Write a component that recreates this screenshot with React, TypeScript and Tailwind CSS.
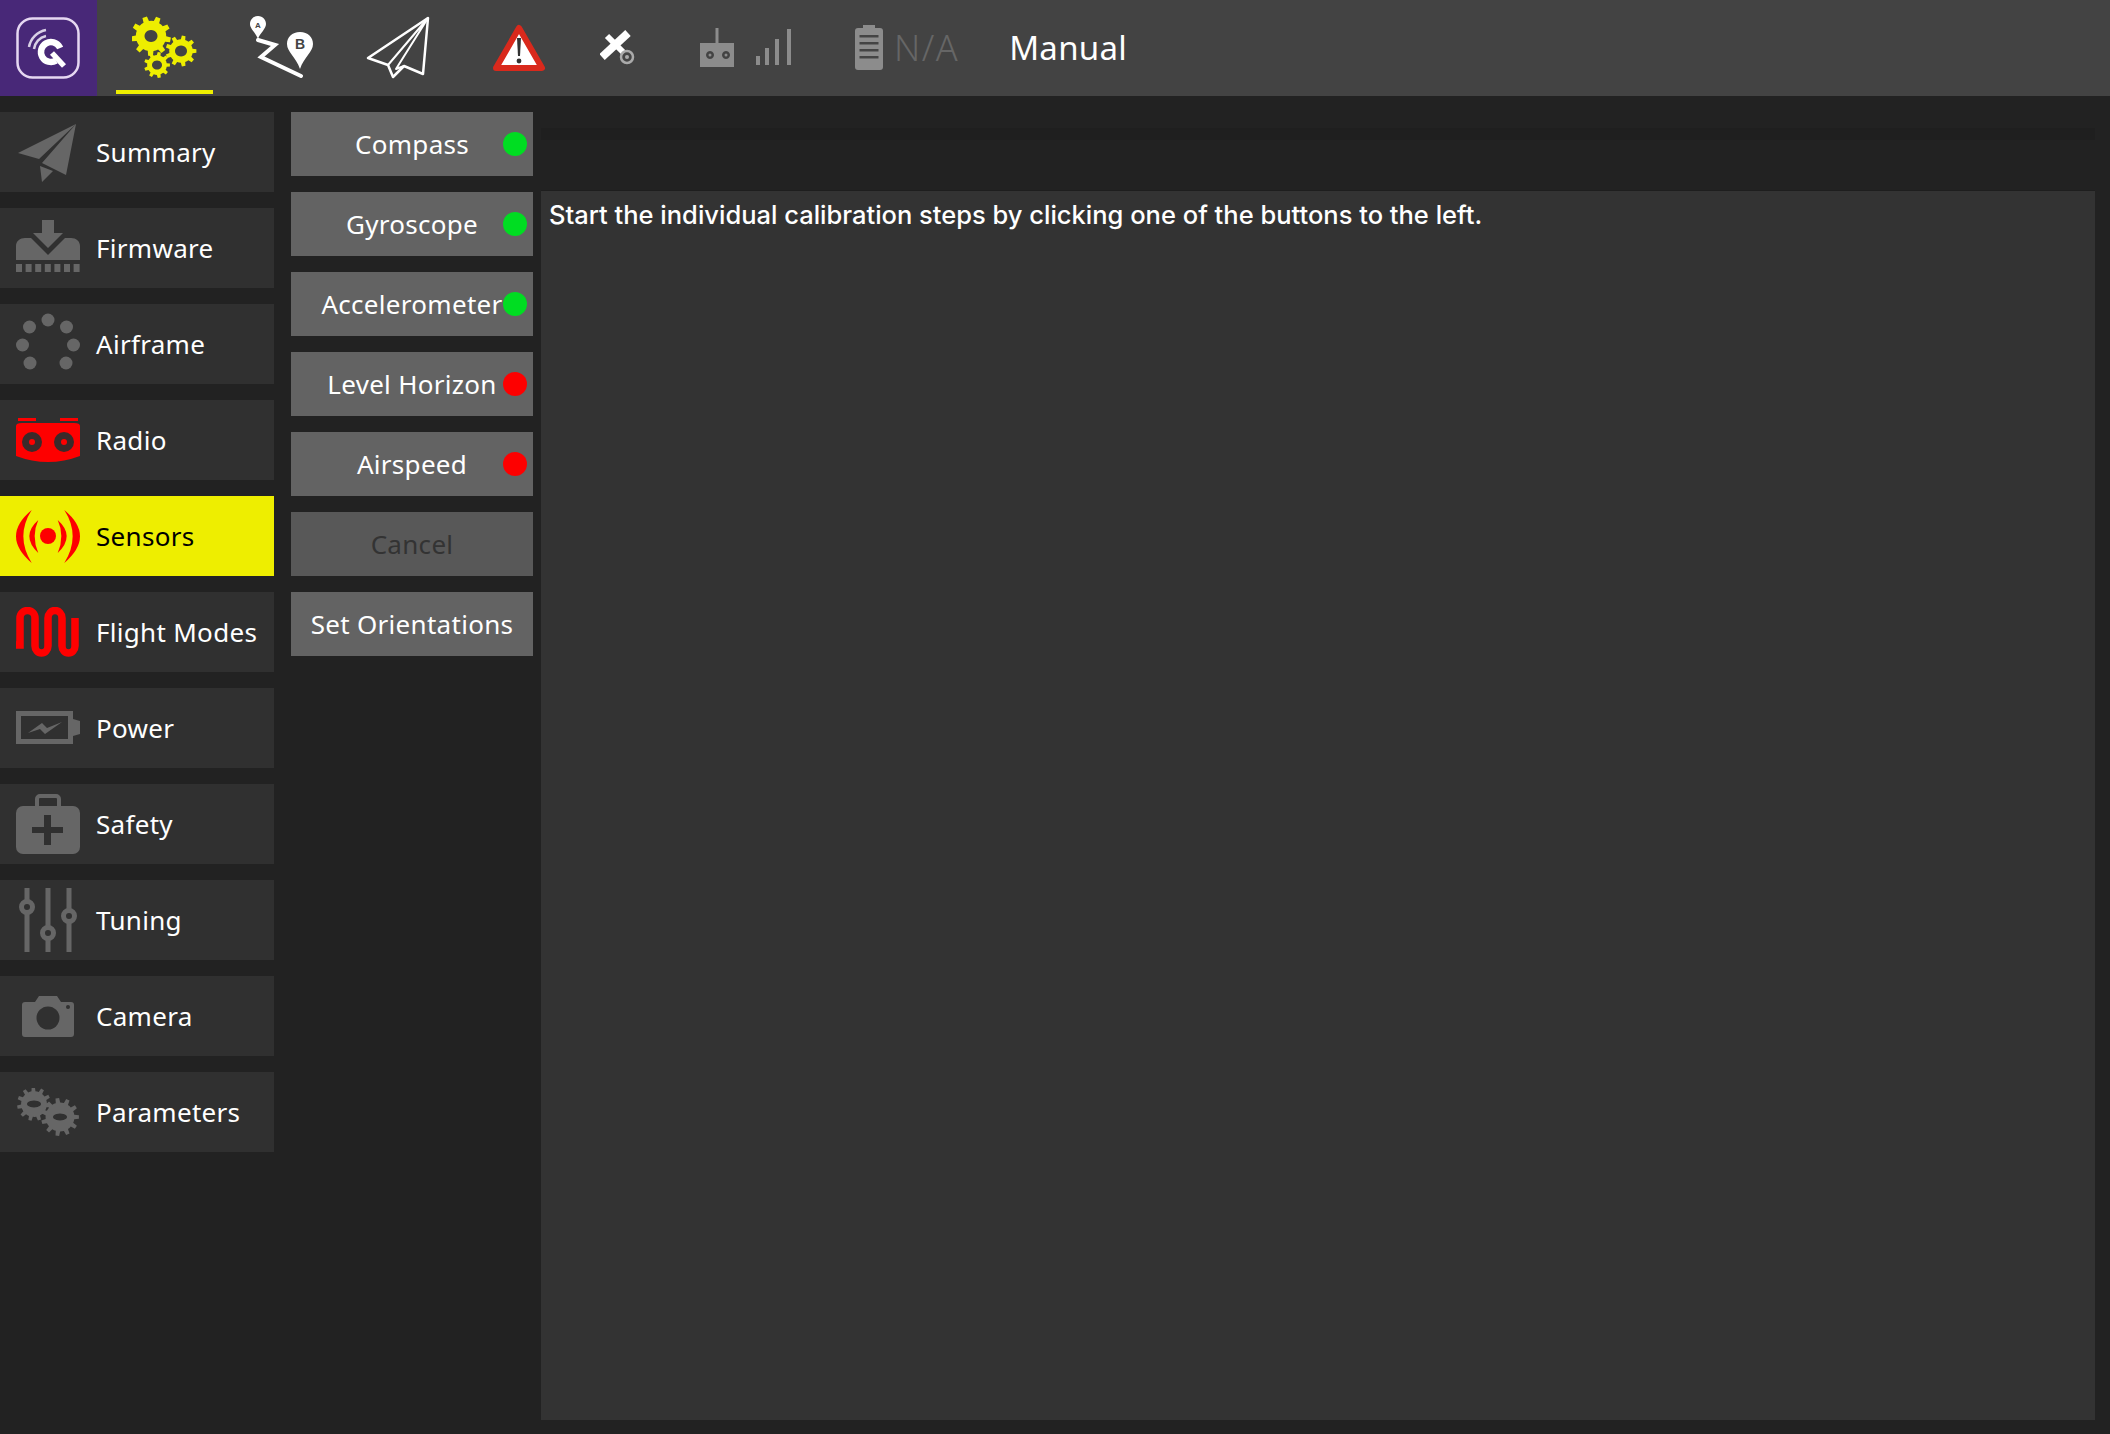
import React from "react";

const gray = "#666666";

// cog outline used by the settings and parameters icons
const gearPath = (cx: number, cy: number, r: number, teeth: number, start = 0) => {
  const pts: string[] = [];
  const outer = r;
  const inner = r * 0.76;
  const step = (Math.PI * 2) / teeth;
  for (let i = 0; i < teeth; i++) {
    const a = start + i * step;
    const seq: [number, number][] = [
      [inner, a - step * 0.5],
      [inner, a - step * 0.27],
      [outer, a - step * 0.17],
      [outer, a + step * 0.17],
      [inner, a + step * 0.27],
    ];
    seq.forEach(([rad, t]) => {
      pts.push(`${(cx + rad * Math.cos(t)).toFixed(2)} ${(cy + rad * Math.sin(t)).toFixed(2)}`);
    });
  }
  return `M${pts.join("L")}Z`;
};

const LogoIcon = () => (
  <svg width="64" height="62" viewBox="0 0 64 62" fill="none">
    <rect x="1.5" y="1.5" width="61" height="59" rx="15" stroke="#e6d8f2" strokeWidth="2.5" />
    <circle cx="35" cy="35" r="10" stroke="#fff" strokeWidth="6.5" strokeDasharray="48 15" transform="rotate(60 35 35)" />
    <path d="M36 36l12 13" stroke="#fff" strokeWidth="5.5" />
    <path d="M13 30a21 21 0 0 1 17-17M18 32a15 15 0 0 1 12-13" stroke="#d9d0e6" strokeWidth="2.5" />
  </svg>
);

const GearsIcon = () => (
  <svg width="65" height="62" viewBox="0 0 65 62" fill="#eeee00" fillRule="evenodd">
    <path d={`${gearPath(19, 20, 20, 9, 0.2)}M19 14a6.5 6 0 1 0 .01 0Z`} />
    <path d={`${gearPath(49, 35, 15.5, 9)}M49 29.5a6 5.5 0 1 0 .01 0Z`} />
    <path d={`${gearPath(25, 49, 13, 9)}M25 44.5a5 4.5 0 1 0 .01 0Z`} />
  </svg>
);

const RouteIcon = () => (
  <svg width="65" height="62" viewBox="0 0 65 62" fill="none">
    <path d="M8 0c-5 0-8 4-8 8 0 5 6 9 8 15 2-6 8-10 8-15 0-4-3-8-8-8Z" fill="#fff" />
    <path d="M50 16c-8 0-13 5-13 12 0 8 9 13 13 25 4-12 13-17 13-25 0-7-5-12-13-12Z" fill="#fff" />
    <text x="50" y="33" textAnchor="middle" fontSize="14" fontWeight="700" fill="#444" fontFamily="Liberation Sans, sans-serif">B</text>
    <text x="8" y="12" textAnchor="middle" fontSize="8" fontWeight="700" fill="#444" fontFamily="Liberation Sans, sans-serif">A</text>
    <path d="M8 24l17 5-14 12 40 19" stroke="#fff" strokeWidth="4" strokeLinejoin="miter" strokeLinecap="round" />
  </svg>
);

const PlaneOutline = () => (
  <svg width="65" height="63" viewBox="0 0 65 63" fill="none" stroke="#fff" strokeWidth="2.5" strokeLinejoin="round">
    <path d="M62 2 2 42l20 7 5 12 11-11 19 8Z" />
    <path d="M62 2 22 49M62 2 30 53l8-3" strokeWidth="2" />
  </svg>
);

const WarningIcon = () => (
  <svg width="54" height="50" viewBox="0 0 54 50">
    <path d="M27 5 50 45H4Z" fill="#fff" stroke="#d9291c" strokeWidth="6" strokeLinejoin="round" />
    <path d="M25 15h4l-1 18h-2Z" fill="#333" />
    <circle cx="27" cy="38" r="2.4" fill="#333" />
  </svg>
);

const SatelliteIcon = () => (
  <svg width="36" height="36" viewBox="0 0 36 36" fill="none">
    <path d="M2 27 28 3" stroke="#fff" strokeWidth="8" />
    <path d="M7 6l18 18" stroke="#fff" strokeWidth="6" />
    <circle cx="27" cy="27" r="6" stroke="#aaa" strokeWidth="2.5" fill="#444" />
    <circle cx="27" cy="27" r="2" fill="#aaa" />
  </svg>
);

const RemoteIcon = () => (
  <svg width="34" height="40" viewBox="0 0 34 40">
    <rect x="15.5" y="0" width="3" height="16" fill="#8c8c8c" />
    <path fillRule="evenodd" fill="#8c8c8c" d="M0 15h34v24H0ZM10 23a4 4 0 1 0 .01 0ZM26 23a4 4 0 1 0 .01 0Z" />
    <circle cx="10" cy="27" r="1.5" fill="#8c8c8c" />
    <circle cx="26" cy="27" r="1.5" fill="#8c8c8c" />
  </svg>
);

const SignalIcon = () => (
  <svg width="37" height="38" viewBox="0 0 37 38" fill="#8c8c8c">
    <rect x="1" y="27" width="4" height="9" />
    <rect x="10" y="19" width="4" height="17" />
    <rect x="20" y="10" width="4" height="26" />
    <rect x="32" y="0" width="4" height="36" />
  </svg>
);

const BatteryIcon = () => (
  <svg width="28" height="46" viewBox="0 0 28 46">
    <rect x="8" y="0" width="12" height="4" fill="#8c8c8c" />
    <rect x="0" y="3" width="28" height="42" rx="3" fill="#8c8c8c" />
    {[10, 17, 24, 31].map((y) => (
      <rect key={y} x="4.5" y={y} width="19" height="2.5" fill="#444" />
    ))}
  </svg>
);

const SummaryIcon = () => (
  <svg width="64" height="64" viewBox="0 0 64 64" fill={gray}>
    <path d="M60 4 2 33l21 6ZM60 4 26 43l24 12ZM24 46l2 16 11-11Z" />
  </svg>
);

const FirmwareIcon = () => (
  <svg width="64" height="56" viewBox="0 0 64 56" fill={gray}>
    <path d="M26 0h12v13h9L32 28 17 13h9Z" />
    <path d="M0 40V26c0-5 4-8 9-8h6l17 17 17-17h6c5 0 9 3 9 8v14Z" />
    {[0, 9.6, 19.2, 28.8, 38.4, 48, 57.6].map((x) => (
      <rect key={x} x={x} y="44" width="6" height="8" />
    ))}
  </svg>
);

const AirframeIcon = () => {
  const dots = [[32, 7], [13.5, 14], [50.5, 14], [6.5, 32], [57.5, 32], [14, 50], [50, 50]];
  return (
    <svg width="64" height="62" viewBox="0 0 64 62" fill={gray}>
      {dots.map(([x, y]) => (
        <circle key={`${x}-${y}`} cx={x} cy={y} r="6.5" />
      ))}
    </svg>
  );
};

const RadioIcon = () => (
  <svg width="64" height="44" viewBox="0 0 64 44">
    <path d="M2 0h18v3H2ZM44 0h18v3H44Z" fill="#fe0000" />
    <path d="M0 8q0-3 6-3h52q6 0 6 3v30q-16 6-32 6T0 38Z" fill="#fe0000" />
    <circle cx="16" cy="24" r="10" fill="#3a2a2a" />
    <circle cx="48" cy="24" r="10" fill="#3a2a2a" />
    <circle cx="16" cy="24" r="3" fill="#fe0000" />
    <circle cx="48" cy="24" r="3" fill="#fe0000" />
  </svg>
);

const SensorsIcon = () => (
  <svg width="64" height="56" viewBox="0 0 64 56" fill="#fe0000">
    <circle cx="32" cy="28" r="8" />
    <path d="M15.7 2Q-15.7 28 15.7 55Q-1 28 15.7 2Z" />
    <path d="M48.3 2Q79.7 28 48.3 55Q65 28 48.3 2Z" />
    <path d="M22.3 12Q4.3 28 22.3 45Q15 28 22.3 12Z" />
    <path d="M41.7 12Q59.7 28 41.7 45Q49 28 41.7 12Z" />
  </svg>
);

const FlightModesIcon = () => (
  <svg width="64" height="50" viewBox="0 0 64 50" fill="none">
    <path
      d="M0 38H4V11a7.5 7.500 0 0 1 15 0V39a6.5 7 0 0 0 13 0V11a7 7.500 0 0 1 14 0V39a6.5 7 0 0 0 13 0V11"
      stroke="#fe0000"
      strokeWidth="7.5"
    />
  </svg>
);

const PowerIcon = () => (
  <svg width="64" height="34" viewBox="0 0 64 34">
    <rect x="2.5" y="2.5" width="52" height="28" fill="none" stroke={gray} strokeWidth="5" />
    <path d="M57 8l7 2v13l-7 2Z" fill={gray} />
    <path d="M12 22 26 12l5 5 15-6-17 12-5-5Z" fill={gray} />
  </svg>
);

const SafetyIcon = () => (
  <svg width="64" height="60" viewBox="0 0 64 60">
    <path d="M21 12V5a3 3 0 0 1 3-3h16a3 3 0 0 1 3 3v7" fill="none" stroke={gray} strokeWidth="4" />
    <rect x="0" y="12" width="64" height="48" rx="7" fill={gray} />
    <path d="M28 21h7v12h12v6H35v12h-7V39H16v-6h12Z" fill="#303030" />
  </svg>
);

const TuningIcon = () => (
  <svg width="60" height="64" viewBox="0 0 60 64" fill="none" stroke={gray}>
    <path d="M9 0v64M30 0v64M51 0v64" strokeWidth="5" />
    <circle cx="9" cy="19" r="5.5" fill="#303030" strokeWidth="5" />
    <circle cx="30" cy="45" r="5.5" fill="#303030" strokeWidth="5" />
    <circle cx="51" cy="28" r="5.5" fill="#303030" strokeWidth="5" />
  </svg>
);

const CameraIcon = () => (
  <svg width="54" height="42" viewBox="0 0 54 42">
    <path d="M4 7h10l4-6h18l4 6h10a3 3 0 0 1 3 3v29a3 3 0 0 1-3 3H4a3 3 0 0 1-3-3V10a3 3 0 0 1 3-3Z" fill={gray} />
    <circle cx="27" cy="23" r="11.5" fill="#303030" />
    <circle cx="47" cy="12" r="2" fill="#303030" />
  </svg>
);

const ParametersIcon = () => (
  <svg width="64" height="48" viewBox="0 0 64 48" fill={gray} fillRule="evenodd">
    <path d={`${gearPath(18, 16, 17, 11, 0.1)}M18 12.5a7 3.5 0 1 0 .01 0Z`} />
    <path d={`${gearPath(44, 29, 19, 11)}M44 25.5a7 3.5 0 1 0 .01 0Z`} />
  </svg>
);

const navItems = [
  { label: "Summary", icon: <SummaryIcon /> },
  { label: "Firmware", icon: <FirmwareIcon /> },
  { label: "Airframe", icon: <AirframeIcon /> },
  { label: "Radio", icon: <RadioIcon /> },
  { label: "Sensors", icon: <SensorsIcon />, active: true },
  { label: "Flight Modes", icon: <FlightModesIcon /> },
  { label: "Power", icon: <PowerIcon /> },
  { label: "Safety", icon: <SafetyIcon /> },
  { label: "Tuning", icon: <TuningIcon /> },
  { label: "Camera", icon: <CameraIcon /> },
  { label: "Parameters", icon: <ParametersIcon /> },
];

const sensorButtons = [
  { label: "Compass", dot: "bg-[#00dd22]" },
  { label: "Gyroscope", dot: "bg-[#00dd22]" },
  { label: "Accelerometer", dot: "bg-[#00dd22]" },
  { label: "Level Horizon", dot: "bg-[#fe0000]" },
  { label: "Airspeed", dot: "bg-[#fe0000]" },
  { label: "Cancel", disabled: true },
  { label: "Set Orientations" },
];

const labelFont = "font-['Noto_Sans','Open_Sans',sans-serif] text-[26px] tracking-[0.3px]";

export default function App() {
  return (
    <div className="flex h-[1434px] w-[2110px] flex-col overflow-hidden bg-[#222222]">
      <header className="flex h-[96px] shrink-0 items-center bg-[#434343]">
        <div className="flex h-full w-[97px] shrink-0 items-center justify-center bg-[#482878] pr-[1px]">
          <LogoIcon />
        </div>
        <div className="relative ml-[19px] flex h-full w-[97px] shrink-0 items-center justify-center pb-[3px]">
          <GearsIcon />
          <div className="absolute bottom-[2px] left-0 h-[4px] w-full bg-[#eeee00]" />
        </div>
        <div className="ml-[37px] pb-[2px]"><RouteIcon /></div>
        <div className="ml-[51px] pb-[2px]"><PlaneOutline /></div>
        <div className="ml-[61px]"><WarningIcon /></div>
        <div className="ml-[54px]"><SatelliteIcon /></div>
        <div className="ml-[64px]"><RemoteIcon /></div>
        <div className="ml-[21px]"><SignalIcon /></div>
        <div className="ml-[63px] pb-[1px]"><BatteryIcon /></div>
        <span className={`ml-[11px] text-[#666666] ${labelFont} text-[36px] font-light tracking-[1.5px]`}>N/A</span>
        <span className={`ml-[50px] text-white ${labelFont} text-[33px] tracking-[0.2px]`}>Manual</span>
      </header>

      <div className="flex min-h-0 flex-1 pt-[16px]">
        <nav className="flex w-[274px] shrink-0 flex-col gap-[16px]">
          {navItems.map((item) => (
            <div
              key={item.label}
              className={`flex h-[80px] items-center ${item.active ? "bg-[#eeee00] text-black" : "bg-[#303030] text-white"}`}
            >
              <div className="flex w-[96px] shrink-0 items-center justify-center">{item.icon}</div>
              <span className={`${labelFont} whitespace-nowrap`}>{item.label}</span>
            </div>
          ))}
        </nav>

        <div className="ml-[17px] flex w-[242px] shrink-0 flex-col gap-[16px]">
          {sensorButtons.map((btn) => (
            <div
              key={btn.label}
              className={`relative flex h-[64px] items-center justify-center ${btn.disabled ? "bg-[#585858] text-[#333333]" : "bg-[#636363] text-white"}`}
            >
              <span className={`${labelFont} whitespace-nowrap`}>{btn.label}</span>
              {btn.dot && <span className={`absolute right-[6px] top-[20px] h-[24px] w-[24px] rounded-full ${btn.dot}`} />}
            </div>
          ))}
        </div>

        <main className="ml-[8px] flex min-w-0 flex-1 flex-col pr-[15px] pb-[14px]">
          <div className="mt-[16px] h-[12px] shrink-0 bg-[#1f1f1f]" />
          <div className="mt-[50px] flex-1 border-t border-[#1e1e1e] bg-[#333333] px-[8px] py-[6px]">
            <p className="font-['Inter',sans-serif] text-[25.5px] font-medium leading-[36px] text-white">
              Start the individual calibration steps by clicking one of the buttons to the left.
            </p>
          </div>
        </main>
      </div>
    </div>
  );
}
